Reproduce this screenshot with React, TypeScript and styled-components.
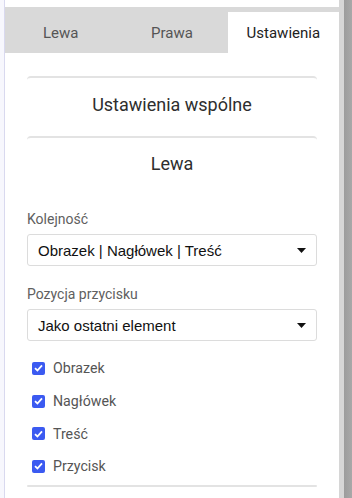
import React from 'react'
import styled, { createGlobalStyle } from 'styled-components'

const Global = createGlobalStyle`
	html, body {
		margin: 0;
		padding: 0;
		background: #fff;
		font-family: Roboto, 'Liberation Sans', sans-serif;
	}
`

const Frame = styled.div`
	display: flex;
	width: 352px;
	height: 498px;
	overflow: hidden;
`

const LeftEdge = styled.div`
	width: 4px;
	background: #f7f7fd;
	border-right: 1px solid #d9d9ef;
`

const ScrollTrack = styled.div`
	width: 5px;
	background: #d6d6d6;
`

const ScrollEdge = styled.div`
	width: 8px;
	background: linear-gradient(to right, #9c9c9c, #a8a8a8);
`

const Panel = styled.div`
	flex: 1;
	display: flex;
	flex-direction: column;
	padding-top: 7px;
	background: #fff;
`

const TabBar = styled.div`
	display: grid;
	grid-template-columns: repeat(3, 1fr);
	align-items: end;
	height: 46px;
	background: #d9d9d9;
`

const Tab = styled.div<{ $active?: boolean }>`
	height: 41px;
	display: flex;
	align-items: center;
	justify-content: center;
	font-size: 15px;
	color: ${(p) => (p.$active ? '#222' : '#555')};
	background: ${(p) => (p.$active ? '#fff' : 'transparent')};
`

const Content = styled.div`
	padding: 23px 22px 0;
`

const Card = styled.section`
	border-top: 2px solid #e3e3e3;
	border-radius: 4px;
`

const CardTitle = styled.h2<{ $pad: string }>`
	margin: 0;
	padding: ${(p) => p.$pad};
	text-align: center;
	font-weight: 400;
	font-size: 18px;
	line-height: 20px;
	color: #2e2e2e;
`

const Body = styled.div`
	display: flex;
	flex-direction: column;
`

const Label = styled.label<{ $top: number }>`
	margin-top: ${(p) => p.$top}px;
	font-size: 14px;
	line-height: 17px;
	color: #606060;
`

const Select = styled.div`
	margin-top: 6px;
	height: 30px;
	display: flex;
	align-items: center;
	justify-content: space-between;
	padding: 0 10px;
	border: 1px solid #dcdcdc;
	border-radius: 3px;
	font-family: 'Liberation Sans', Arial, sans-serif;
	font-size: 15px;
	color: #111;
`

const Checks = styled.div`
	display: flex;
	flex-direction: column;
	margin-top: 11px;
	padding-left: 5px;
`

const CheckRow = styled.label`
	display: flex;
	align-items: center;
	gap: 8px;
	height: 32.7px;
	font-size: 14.2px;
	color: #555;
`

const Box = styled.span`
	width: 13px;
	height: 13px;
	border-radius: 2px;
	background: #3b5af1;
	display: flex;
	align-items: center;
	justify-content: center;
`

const Spacer = styled.div`
	height: 2px;
`

const Caret = () => (
	<svg width="9" height="5" viewBox="0 0 9 5">
		<path d="M0 0h9L4.5 5z" fill="#111" />
	</svg>
)

const Check = ({ label }: { label: string }) => (
	<CheckRow>
		<Box>
			<svg width="9" height="8" viewBox="0 0 9 8">
				<path d="M1 4.2 3.4 6.5 8 1.3" fill="none" stroke="#fff" strokeWidth="1.8" />
			</svg>
		</Box>
		{label}
	</CheckRow>
)

export default function App() {
	return (
		<>
			<Global />
			<Frame>
				<LeftEdge />
				<Panel>
					<TabBar>
						<Tab>Lewa</Tab>
						<Tab>Prawa</Tab>
						<Tab $active>Ustawienia</Tab>
					</TabBar>
					<Content>
						<Card>
							<CardTitle $pad="17px 0 21px">Ustawienia wspólne</CardTitle>
						</Card>
						<Card>
							<CardTitle $pad="16px 0 0">Lewa</CardTitle>
							<Body>
								<Label $top={37}>Kolejność</Label>
								<Select>
									<span>Obrazek | Nagłówek | Treść</span>
									<Caret />
								</Select>
								<Label $top={20}>Pozycja przycisku</Label>
								<Select>
									<span>Jako ostatni element</span>
									<Caret />
								</Select>
								<Checks>
									<Check label="Obrazek" />
									<Check label="Nagłówek" />
									<Check label="Treść" />
									<Check label="Przycisk" />
								</Checks>
								<Spacer />
							</Body>
						</Card>
						<Card />
					</Content>
				</Panel>
				<ScrollTrack />
				<ScrollEdge />
			</Frame>
		</>
	)
}
